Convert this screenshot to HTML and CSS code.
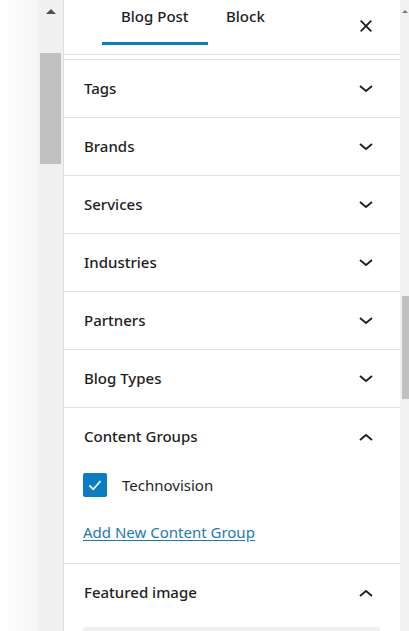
FILE: index.html
```html
<!DOCTYPE html>
<html>
<head>
<meta charset="utf-8">
<link rel="stylesheet" href="styles.css">
</head>
<body>
<div class="page">
  <div class="backdrop"></div>
  <div class="scroll-left">
    <div class="arrow-up"></div>
    <div class="thumb-left"></div>
  </div>
  <div class="panel">
    <div class="header">
      <div class="tabs">
        <div class="tab active">Blog Post</div>
        <div class="tab">Block</div>
      </div>
      <button class="close" aria-label="Close">
        <svg width="12" height="12" viewBox="0 0 12 12"><path d="M0.7 0.7L11.3 11.3M11.3 0.7L0.7 11.3" stroke="#1e1e1e" stroke-width="1.8" fill="none"/></svg>
      </button>
    </div>
    <div class="sections">
      <div class="section">
        <div class="section-head"><span>Tags</span><svg class="chev" viewBox="0 0 14 8"><polyline points="1,1 7,6 13,1"/></svg></div>
      </div>
      <div class="section">
        <div class="section-head"><span>Brands</span><svg class="chev" viewBox="0 0 14 8"><polyline points="1,1 7,6 13,1"/></svg></div>
      </div>
      <div class="section">
        <div class="section-head"><span>Services</span><svg class="chev" viewBox="0 0 14 8"><polyline points="1,1 7,6 13,1"/></svg></div>
      </div>
      <div class="section">
        <div class="section-head"><span>Industries</span><svg class="chev" viewBox="0 0 14 8"><polyline points="1,1 7,6 13,1"/></svg></div>
      </div>
      <div class="section">
        <div class="section-head"><span>Partners</span><svg class="chev" viewBox="0 0 14 8"><polyline points="1,1 7,6 13,1"/></svg></div>
      </div>
      <div class="section">
        <div class="section-head"><span>Blog Types</span><svg class="chev" viewBox="0 0 14 8"><polyline points="1,1 7,6 13,1"/></svg></div>
      </div>
      <div class="section">
        <div class="section-head"><span>Content Groups</span><svg class="chev" viewBox="0 0 14 8"><polyline points="1,7 7,2 13,7"/></svg></div>
        <div class="section-body">
          <label class="check-row">
            <span class="checkbox"><svg width="24" height="24" viewBox="0 0 24 24"><path d="M6.5 12.5l3.8 3.8L17.5 8" stroke="#fff" stroke-width="1.8" fill="none"/></svg></span>
            <span class="check-label">Technovision</span>
          </label>
          <a class="add-link" href="#">Add New Content Group</a>
        </div>
      </div>
      <div class="section">
        <div class="section-head"><span>Featured image</span><svg class="chev" viewBox="0 0 14 8"><polyline points="1,7 7,2 13,7"/></svg></div>
        <div class="featured-body">
          <div class="image-box"></div>
        </div>
      </div>
    </div>
  </div>
  <div class="scroll-right">
    <div class="arrow-up small"></div>
    <div class="thumb-right"></div>
  </div>
</div>
</body>
</html>
```

FILE: styles.css
```css
* { box-sizing: border-box; }
html, body { margin: 0; padding: 0; }
body {
  font-family: "Noto Sans", "Open Sans", sans-serif;
  color: #1e1e1e;
  background: #fff;
}
.page {
  display: flex;
  width: 409px;
  height: 631px;
  overflow: hidden;
}
.backdrop {
  width: 38px;
  flex: none;
  background: linear-gradient(90deg, #ffffff 0%, #f6f6f6 100%);
}
.scroll-left {
  width: 26px;
  flex: none;
  background: #f0f0f0;
  border-right: 1px solid #dedede;
  display: flex;
  flex-direction: column;
  align-items: center;
  padding-top: 9px;
}
.arrow-up {
  width: 0;
  height: 0;
  border-left: 5px solid transparent;
  border-right: 5px solid transparent;
  border-bottom: 5px solid #505050;
}
.thumb-left {
  margin-top: 39px;
  width: 21px;
  height: 111px;
  background: #c1c1c1;
  margin-right: 1px;
}
.panel {
  flex: 1;
  background: #fff;
  display: flex;
  flex-direction: column;
}
.header {
  height: 55px;
  border-bottom: 1px solid #e0e0e0;
  display: flex;
  align-items: flex-start;
  padding-left: 38px;
  flex: none;
}
.tabs {
  display: flex;
}
.tab {
  height: 45px;
  padding: 5px 18px 0;
  font-size: 15px;
  font-weight: 500;
  line-height: 22px;
  border-bottom: 3px solid transparent;
}
.tab:first-child { padding: 5px 18px 0 19px; width: 106px; }
.tab.active { border-bottom-color: #0a7cc1; }
.close {
  margin-left: auto;
  margin-right: 28px;
  margin-top: 20px;
  width: 12px;
  height: 12px;
  padding: 0;
  border: 0;
  background: none;
  display: flex;
}
.sections {
  margin-top: 4px;
  border-top: 1px solid #e0e0e0;
}
.section {
  border-bottom: 1px solid #e0e0e0;
}
.section-head {
  height: 57px;
  display: flex;
  align-items: center;
  justify-content: space-between;
  padding: 0 27px 2px 20px;
  font-size: 15px;
  font-weight: 500;
}
.chev {
  width: 14px;
  height: 8px;
  margin-top: 3px;
  fill: none;
  stroke: #1e1e1e;
  stroke-width: 1.8;
}
.section-body {
  padding: 8px 20px 21px 19px;
}
.check-row {
  display: flex;
  align-items: center;
  height: 24px;
}
.checkbox {
  width: 24px;
  height: 24px;
  border-radius: 2px;
  background: #0a7cc1;
  display: flex;
}
.check-label {
  margin-left: 15px;
  font-size: 15px;
  font-weight: 400;
  color: #1e1e1e;
}
.add-link {
  display: block;
  margin-top: 25px;
  line-height: 20px;
  font-size: 15px;
  color: #1d78b9;
  text-decoration: underline;
  text-underline-offset: 2px;
}
.featured-body {
  padding: 6px 20px 0 19px;
}
.image-box {
  height: 60px;
  background: #f0f0f0;
  border-radius: 3px;
}
.scroll-right {
  width: 9px;
  flex: none;
  background: #f1f1f1;
  display: flex;
  flex-direction: column;
  align-items: flex-end;
  padding-top: 10px;
}
.arrow-up.small {
  border-left-width: 3px;
  border-right-width: 3px;
  border-bottom-width: 3px;
  margin-right: 1px;
  border-bottom-color: #777;
}
.thumb-right {
  margin-top: 283px;
  width: 7px;
  height: 103px;
  background: #c1c1c1;
}
```
